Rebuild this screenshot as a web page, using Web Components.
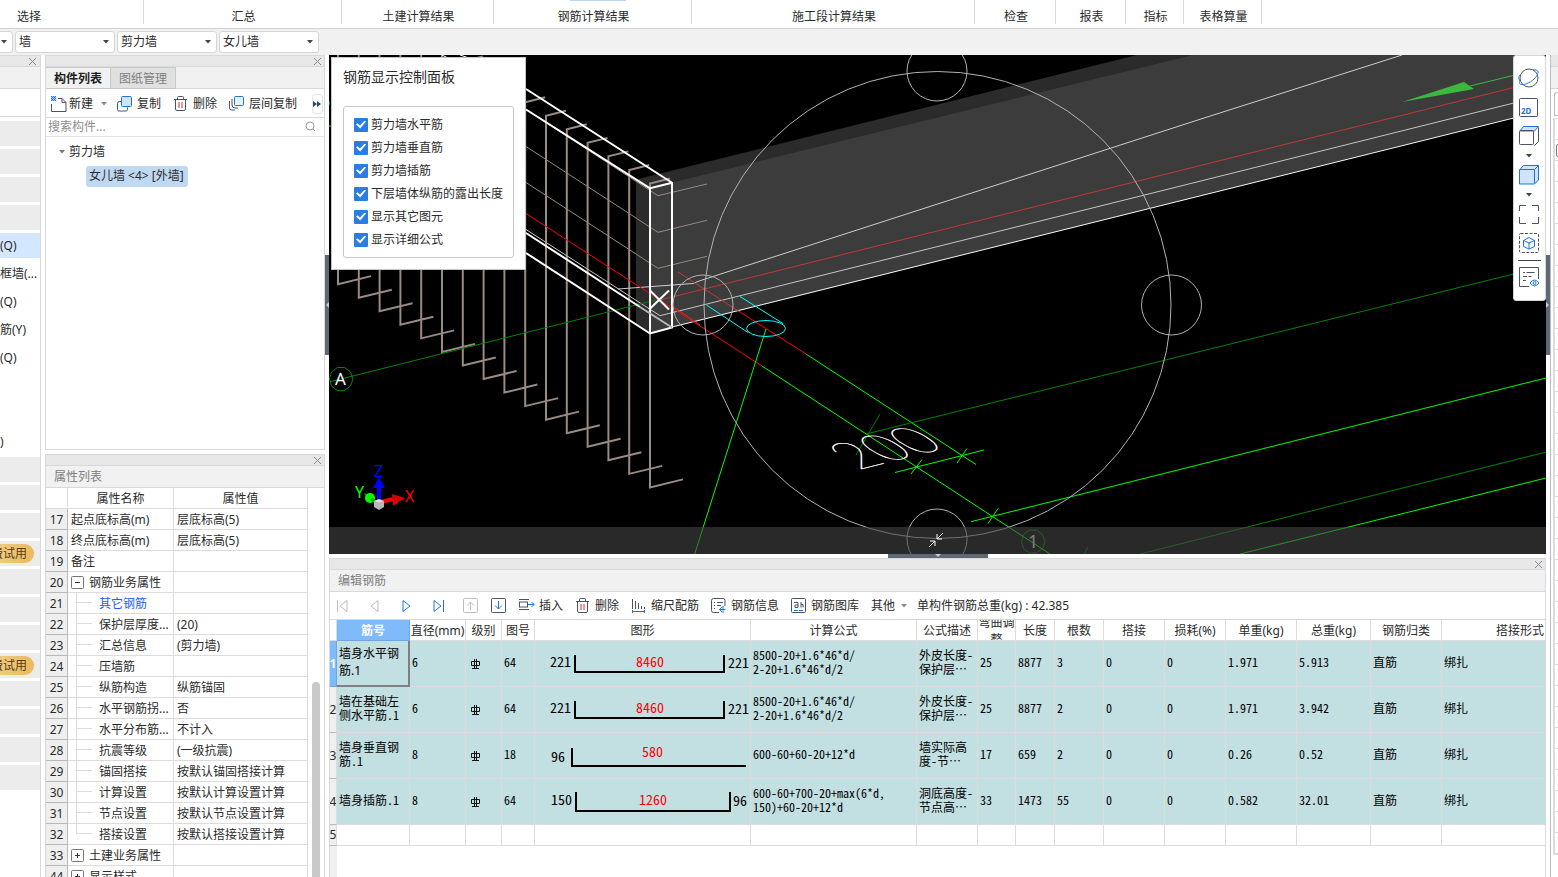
<!DOCTYPE html>
<html lang="zh-CN">
<head>
<meta charset="utf-8">
<title>编辑钢筋</title>
<style>
  html, body {
    margin: 0;
    height: 100%;
  }
  body {
    font: 12px/16px "Noto Sans", "Noto Sans CJK SC", sans-serif;
    color: #2b2b2b;
    background: #fff;
    --line: #d9d9d9;
    --bar: #f1f1f1;
    --title: #e7e7e7;
    --ink: #4a5363;
    --blue: #1d74e0;
    --splitter: #5f6975;
  }
</style>
</head>
<body>
<app-window></app-window>

<script>
const icons = {
  create: '<path d="M8 3.500h4l4 4v9H1.500V9" fill="none" stroke="#4a5363"/><path d="M12 3.500v4h4" fill="none" stroke="#4a5363"/><path d="M1 1h1v1H1zM3 1h1v1H3zM5 1h1v1H5zM2 2h1v1H2zM4 2h1v1H4zM1 3h1v1H1zM3 3h1v1H3zM5 3h1v1H5zM2 4h1v1H2zM4 4h1v1H4zM1 5h1v1H1zM3 5h1v1H3zM5 5h1v1H5z" fill="#1d74e0"/><path d="M1 1h5v5H1z" fill="#1d74e0" opacity=".35"/>',
  copy: '<path d="M4 6.500H2.500Q.500 6.500 .500 8.500v6q0 1.500 1.500 1.500h7q1.500 0 1.500-1.500v-2" fill="none" stroke="#4a5363"/><rect x="4.500" y="1.500" width="10" height="10" rx="1" fill="#cfe3fb" stroke="#1d74e0"/>',
  trash: '<path d="M1 4.500h13M4.500 4V2.500q0-1 1-1h4q1 0 1 1V4M2.500 5v9q0 1.500 1.500 1.500h7q1.500 0 1.500-1.500V5" fill="none" stroke="#4a5363"/><path d="M6 7v6M9 7v6" stroke="#e0262b"/>',
  layers: '<path d="M.500 6v7q0 2 2 2H6M3 4v6q0 3 3 3h3" fill="none" stroke="#4a5363"/><rect x="5.500" y="1.500" width="9" height="9" rx="1" fill="#e8f2ff" stroke="#1d74e0"/>',
  first: '<path d="M3.500 3v12" stroke="#bdbdbd"/><path d="M13 3.500v11L6 9z" fill="none" stroke="#bdbdbd"/>',
  prev: '<path d="M12 3.500v11L5 9z" fill="none" stroke="#bdbdbd"/>',
  next: '<path d="M5 3.500v11L12 9z" fill="none" stroke="#1d74e0"/>',
  last: '<path d="M4 3.500v11L11 9z" fill="none" stroke="#1d74e0"/><path d="M13.500 3v12" stroke="#1d74e0"/>',
  up: '<rect x="1.500" y="1.500" width="14" height="14" rx="1" fill="none" stroke="#bdbdbd"/><path d="M8.500 13V5M5 8.500L8.500 5L12 8.500" fill="none" stroke="#bdbdbd"/>',
  down: '<rect x="1.500" y="1.500" width="14" height="14" rx="1" fill="none" stroke="#4a5363"/><path d="M8.500 4v8M5 8.500L8.500 12L12 8.500" fill="none" stroke="#1d74e0"/>',
  insert: '<path d="M1 2.500h10M1 12.500h10" stroke="#4a5363"/><rect x="1.500" y="5" width="8" height="5" fill="none" stroke="#4a5363"/><path d="M10 7.500h6M13.500 5L16 7.500L13.500 10" fill="none" stroke="#1d74e0"/>',
  scale: '<path d="M1.500 2v10M4.500 4v8M7.500 6v6M10.500 9v3M13.500 10v2" stroke="#4a5363"/><path d="M1 14.500h13M1.500 13v3M13.500 13v3" stroke="#1d74e0"/>',
  info: '<path d="M8 15.500H2.500Q.500 15.500 .500 13.500V3.500q0-2 2-2H12q2 0 2 2V9" fill="none" stroke="#4a5363"/><path d="M3 5.500h1M6 5.500h6M3 8.500h1M6 8.500h4M3 11.500h1" stroke="#4a5363"/><path d="M12 9v7M8.500 12.500h6M11 10L8.500 12.500L11 15" fill="none" stroke="#1d74e0"/>',
  library: '<rect x=".5" y="1.500" width="14" height="14" rx="1" fill="none" stroke="#4a5363"/><path d="M3 5.500h4v5H4v-2.500h3M10 5v5.500M10 7.500h2v3" fill="none" stroke="#4a5363"/><path d="M3 13.500h4M8 13.500h4" stroke="#1d74e0"/>',
  more: '<path d="M0 6l4 3-4 3zM4 6l4 3-4 3z" fill="#3b4452"/>',
  search: '<circle cx="8" cy="8" r="4" fill="none" stroke="#9a9a9a"/><path d="M11 11l2 2" stroke="#9a9a9a"/>'
}
const icon = (name, w = 18) => `<svg width="${w}" height="18" viewBox="0 0 ${w} 18" aria-hidden="true">${icons[name]}</svg>`
const closeIcon = '<svg width="9" height="9" viewBox="0 0 9 9" aria-hidden="true"><path d="M1 1l7 7M8 1l-7 7" stroke="#8a8a8a" fill="none"/></svg>'
const caret = (color = '#444') => `<svg width="6" height="4" viewBox="0 0 6 4" aria-hidden="true"><path d="M0 0h6L3 3.500z" fill="${color}"/></svg>`

const common = `
  *, *::before, *::after { box-sizing: border-box; }
  button {
    font: inherit; color: inherit; background: none; border: 0; padding: 0; margin: 0;
    display: flex; align-items: center; white-space: nowrap;
  }
  svg { display: block; flex: none; }
  table { border-collapse: separate; border-spacing: 0; table-layout: fixed; }
  td, th { padding: 0; font-weight: normal; }
`

class BaseElement extends HTMLElement {
  connectedCallback() {
    if (this.shadowRoot) return
    const root = this.attachShadow({ mode: 'open' })
    root.innerHTML = `<style>${common}${this.styles()}</style>${this.render()}`
  }
}

class AppWindow extends BaseElement {
  styles() {
    return `
      :host { display: flex; flex-direction: column; height: 100vh; overflow: hidden; }
      main { flex: 1; min-height: 0; display: grid; grid-template-columns: 41px 4px 280px 4px minmax(0, 1fr) 4px 8px; }
      .side { display: grid; grid-template-rows: minmax(0, 395fr) minmax(0, 423fr); row-gap: 4px; min-height: 0; }
      .center { display: grid; grid-template-rows: minmax(0, 499fr) 4px minmax(0, 319fr); min-height: 0; min-width: 0; }
      .nav { grid-column: 1; }
      .side { grid-column: 3; }
    `
  }
  render() {
    return `
      <ribbon-bar></ribbon-bar>
      <selector-bar></selector-bar>
      <main>
        <nav-list class="nav"></nav-list>
        <div class="side">
          <component-list></component-list>
          <property-grid></property-grid>
        </div>
        <split-handle dir="left"></split-handle>
        <div class="center">
          <scene-view></scene-view>
          <split-handle dir="down"></split-handle>
          <rebar-editor></rebar-editor>
        </div>
        <split-handle dir="right"></split-handle>
        <side-strip></side-strip>
      </main>
    `
  }
}
customElements.define('app-window', AppWindow)

const groups = [
  ['土建计算结果', 152], ['钢筋计算结果', 198], ['施工段计算结果', 283], ['检查', 81],
  ['报表', 70], ['指标', 58], ['表格算量', 78]
]

class RibbonBar extends BaseElement {
  styles() {
    return `
      :host { display: flex; flex: none; height: 29px; border-bottom: 1px solid #d2d2d2; background: #fff; }
      div { height: 24px; padding: 9px 0 0 2px; border-right: 1px solid #d9d9d9; text-align: center; flex: none; white-space: nowrap; line-height: 15px; }
      .first { width: 144px; text-align: left; padding-left: 17px; }
      .sum { width: 198px; }
      .active { background: linear-gradient(#b9d3f0, #b9d3f0) 76px 0 / 56px 1px no-repeat; }
    `
  }
  render() {
    return `<div class="first">选择</div><div class="sum">汇总</div>` + groups.map(([label, width]) =>
      `<div style="width: ${width}px" ${label === '钢筋计算结果' ? 'class="active"' : ''}>${label}</div>`).join('')
  }
}
customElements.define('ribbon-bar', RibbonBar)

class DropDown extends BaseElement {
  styles() {
    return `
      :host { display: grid; grid-template: 22px / 100px; align-items: center; }
      select {
        grid-area: 1 / 1; appearance: none; width: 100px; height: 22px; margin: 0; padding: 0 3px; border: 1px solid #d6d6d6;
        border-radius: 3px; background: #fff; font: inherit; color: inherit;
      }
      svg { grid-area: 1 / 1; justify-self: end; margin-right: 6px; pointer-events: none; }
    `
  }
  render() {
    const value = this.getAttribute('value')
    return `<select aria-label="${this.getAttribute('label')}"><option>${value}</option></select>${caret()}`
  }
}
customElements.define('drop-down', DropDown)

class SelectorBar extends BaseElement {
  styles() {
    return `
      :host { display: flex; flex: none; align-items: center; gap: 2px; height: 26px; background: var(--bar); overflow: hidden; }
      drop-down { flex: none; }
      drop-down:first-of-type { margin-left: -87px; }
    `
  }
  render() {
    return `
      <drop-down label="楼层" value=""></drop-down>
      <drop-down label="类别" value="墙"></drop-down>
      <drop-down label="类型" value="剪力墙"></drop-down>
      <drop-down label="构件" value="女儿墙"></drop-down>
    `
  }
}
customElements.define('selector-bar', SelectorBar)

// one entry per 28px row: [text, kind]
const navRows = [
  ['', 'group'], ['', 'group'], ['', 'group'], ['', 'group'], ['(Q)', 'selected'],
  ['框墙(...', ''], ['(Q)', ''], ['筋(Y)', ''], ['(Q)', ''], ['', ''], ['', ''], [')', ''],
  ['', 'group'], ['', 'group'], ['', 'group'], ['费试用', 'group trial'], ['', 'group'],
  ['', 'group'], ['', 'group'], ['费试用', 'group trial'], ['', 'group'], ['', 'group'],
  ['', 'group'], ['', 'group']
]

class NavList extends BaseElement {
  styles() {
    return `
      :host { display: flex; flex-direction: column; border-right: 1px solid var(--line); overflow: hidden; }
      header { height: 12px; flex: none; background: var(--title); border: solid var(--line); border-width: 1px 0; display: flex; justify-content: flex-end; align-items: center; padding-right: 3px; }
      .sub { height: 22px; flex: none; background: var(--bar); border-bottom: 1px solid var(--line); }
      .tools { height: 28px; flex: none; border-bottom: 1px solid var(--line); margin-bottom: 4px; }
      ul { list-style: none; margin: 0; padding: 0; display: grid; grid-auto-rows: 25px; row-gap: 3px; }
      li { display: flex; align-items: center; white-space: nowrap; overflow: hidden; }
      .group { background: #ececec; }
      .selected { background: #d3e7ff; }
      .trial { justify-content: flex-end; padding-right: 6px; }
      .trial span {
        flex: none; height: 19px; line-height: 19px; padding: 0 7px 0 12px; border-radius: 10px;
        background: linear-gradient(90deg, #f3d394, #e9ba5c); color: #5c3a10;
      }
    `
  }
  render() {
    return `<header><button aria-label="关闭">${closeIcon}</button></header><div class="sub"></div><div class="tools"></div>
      <ul>${navRows.map(([text, kind]) => `<li class="${kind}"><span>${text}</span></li>`).join('')}</ul>`
  }
}
customElements.define('nav-list', NavList)

class DockPanel extends BaseElement {
  styles() {
    return `
      :host { display: flex; flex-direction: column; min-height: 0; min-width: 0; border: 1px solid var(--line); overflow: hidden; background: #fff; }
      header { height: 11px; flex: none; background: var(--title); border-bottom: 1px solid var(--line); display: flex; justify-content: flex-end; align-items: center; padding-right: 2px; }
      .caption { height: 22px; flex: none; background: var(--bar); border-bottom: 1px solid var(--line); display: flex; }
      ::slotted([slot=caption]) { color: #808080; padding: 3px 8px; }
    `
  }
  render() {
    return `<header><button aria-label="关闭">${closeIcon}</button></header>
      <div class="caption"><slot name="caption"></slot></div><slot></slot>`
  }
}
customElements.define('dock-panel', DockPanel)

class ComponentList extends BaseElement {
  styles() {
    return `
      :host { display: grid; min-height: 0; }
      .tabs { display: flex; padding: 0; }
      .tabs button { height: 22px; width: 65px; padding-top: 1px; justify-content: center; background: #e0e0e0; border: 1px solid #c9c9c9; border-left: 0; color: #808080; }
      .tabs button.on { background: var(--bar); color: #1f1f1f; font-weight: bold; }
      .tools { display: flex; align-items: center; height: 29px; padding: 1px 0 0 4px; border-bottom: 1px solid var(--line); flex: none; }
      .tools svg { margin-right: 2px; }
      .tools button { margin-right: 12px; }
      .tools button.create { margin-right: 10px; }
      .tools .create svg:first-child { margin-right: 1px; }
      .tools .create svg:last-child { margin: 0 0 0 8px; }
      .tools .more { width: 11px; height: 20px; margin: 0 1px 0 auto; border: 1px solid #e4e4e4; border-radius: 3px; overflow: hidden; }
      .tools .more svg { margin: 0; }
      .search { display: flex; align-items: center; height: 19px; border-bottom: 1px solid #e4e4e4; padding: 0 4px 0 2px; flex: none; }
      input { flex: 1; min-width: 0; border: 0; padding: 0; margin: 0; outline: 0; font: inherit; background: none; }
      input::placeholder { color: #8e8e8e; opacity: 1; }
      ul { list-style: none; margin: 0; padding: 3px 0 0 13px; }
      .node { display: flex; align-items: center; height: 24px; gap: 4px; }
      ul ul { padding: 0 0 0 27px; }
      .sel { background: #c0d9f2; border-radius: 3px; padding: 2px 4px 3px 3px; }
    `
  }
  render() {
    return `
      <dock-panel>
        <div slot="caption" class="tabs">
          <button class="on">构件列表</button><button>图纸管理</button>
        </div>
        <div class="tools">
          <button class="create">${icon('create')}新建${caret('#8a8a8a')}</button>
          <button>${icon('copy')}复制</button>
          <button>${icon('trash')}删除</button>
          <button>${icon('layers')}层间复制</button>
          <button class="more" aria-label="更多">${icon('more', 10)}</button>
        </div>
        <div class="search"><input type="text" placeholder="搜索构件..." aria-label="搜索构件">${icon('search')}</div>
        <ul>
          <li><div class="node">${caret('#777')}剪力墙</div>
            <ul><li class="node"><span class="sel">女儿墙 &lt;4&gt; [外墙]</span></li></ul>
          </li>
        </ul>
      </dock-panel>
    `
  }
}
customElements.define('component-list', ComponentList)

// level 0: plain row, 1: expandable group, 2: child of a group
const properties = [
  [17, 0, '起点底标高(m)', '层底标高(5)'],
  [18, 0, '终点底标高(m)', '层底标高(5)'],
  [19, 0, '备注', ''],
  [20, 1, '钢筋业务属性', '', '-'],
  [21, 2, '其它钢筋', ''],
  [22, 2, '保护层厚度...', '(20)'],
  [23, 2, '汇总信息', '(剪力墙)'],
  [24, 2, '压墙筋', ''],
  [25, 2, '纵筋构造', '纵筋锚固'],
  [26, 2, '水平钢筋拐...', '否'],
  [27, 2, '水平分布筋...', '不计入'],
  [28, 2, '抗震等级', '(一级抗震)'],
  [29, 2, '锚固搭接', '按默认锚固搭接计算'],
  [30, 2, '计算设置', '按默认计算设置计算'],
  [31, 2, '节点设置', '按默认节点设置计算'],
  [32, 2, '搭接设置', '按默认搭接设置计算'],
  [33, 1, '土建业务属性', '', '+'],
  [44, 1, '显示样式', '', '+']
]

class PropertyGrid extends BaseElement {
  styles() {
    return `
      :host { display: grid; min-height: 0; }
      dock-panel { border-bottom: 0; }
      .body { display: flex; min-height: 0; }
      table { width: 262px; flex: none; }
      td, th { height: 21px; border: solid #dcdcdc; border-width: 0 1px 1px 0; white-space: nowrap; overflow: hidden; }
      th { padding-top: 2px; }
      th[scope=row] { background: #efefef; border-color: #b9b9b9; }
      td div { display: flex; align-items: center; height: 20px; padding: 2px 0 0 3px; }
      .box { margin: -2px 5px 0 0; }
      .branch { width: 16px; height: 20px; margin: -2px 7px 0 5px; background: linear-gradient(#dcdcdc, #dcdcdc) 0 0 / 1px 100% no-repeat, linear-gradient(#dcdcdc, #dcdcdc) 0 9px / 100% 1px no-repeat; }
      .branch.end { background-size: 1px 10px, 100% 1px; }
      .link { color: #1a5cff; }
      .track { flex: 1; padding-top: 194px; display: flex; justify-content: center; }
      .thumb { width: 8px; border-radius: 4px 4px 0 0; background: #c9c9c9; }
    `
  }
  render() {
    const lead = (level, sign, last) => {
      if (level === 1) return `<svg class="box" width="13" height="13" viewBox="0 0 13 13" aria-hidden="true"><rect x=".5" y=".5" width="12" height="12" rx="1" fill="#fff" stroke="#777"/><path d="M4 6.500h5${sign === '+' ? 'M6.500 4v5' : ''}" stroke="#333"/></svg>`
      if (level === 2) return `<span class="branch ${last ? 'end' : ''}"></span>`
      return ''
    }
    const rows = properties.map(([no, level, name, value, sign]) => `
      <tr><th scope="row">${no}</th>
        <td><div class="${no === 21 ? 'link' : ''}">${lead(level, sign, no === 32)}${name}</div></td>
        <td><div>${value}</div></td></tr>`).join('')
    return `
      <dock-panel>
        <span slot="caption">属性列表</span>
        <div class="body">
          <table>
            <colgroup><col style="width: 22px"><col style="width: 106px"><col style="width: 134px"></colgroup>
            <thead><tr><th></th><th>属性名称</th><th>属性值</th></tr></thead>
            <tbody>${rows}</tbody>
          </table>
          <div class="track"><div class="thumb"></div></div>
        </div>
      </dock-panel>
    `
  }
}
customElements.define('property-grid', PropertyGrid)

class SplitHandle extends BaseElement {
  styles() {
    return `
      :host { display: flex; align-items: flex-start; padding-top: 200px; background: #fff; }
      :host([dir=down]) { justify-content: center; padding: 0; }
      div { width: 4px; height: 100px; background: var(--splitter); display: flex; align-items: center; justify-content: center; }
      :host([dir=down]) div { width: 100px; height: 4px; }
    `
  }
  render() {
    const shapes = { left: 'M4 0v6L1 3z', right: 'M0 0v6L3 3z', down: 'M0 0h6L3 3z' }
    const dir = this.getAttribute('dir')
    const [w, h] = dir === 'down' ? [6, 4] : [4, 6]
    return `<div><svg width="${w}" height="${h}" aria-hidden="true"><path d="${shapes[dir]}" fill="#c3c9d0"/></svg></div>`
  }
}
customElements.define('split-handle', SplitHandle)

class SceneView extends BaseElement {
  styles() {
    return `
      :host { display: grid; position: relative; background: #000; overflow: hidden; min-height: 0; }
      .scene { grid-area: 1 / 1; width: 100%; height: 100%; min-height: 0; }
      .scene text { font-family: "Noto Sans", sans-serif; }
      .foot { position: absolute; left: 0; right: 0; bottom: 0; height: 27px; background: rgba(68, 68, 68, .6); display: flex; justify-content: center; align-items: center; }
      .foot button { margin: 0 4px 2px 0; }
      display-control { position: absolute; left: 2px; top: 2px; }
      view-tools { position: absolute; right: 0; top: 0; }
    `
  }
  bars() {
    let d = ''
    for (let i = 0; i < 16; i++) {
      const x = 650 - i * 20.8
      const bottom = 487.4 - i * 13.55
      const top = 183.5 - i * 13.55
      d += `M${x + 20} ${top - 5}L${x} ${top}V${bottom}l33 -8`
    }
    return d
  }
  render() {
    return `
      <svg class="scene" viewBox="329 55 1217 499" preserveAspectRatio="xMinYMin slice" fill="none" role="img" aria-label="三维视图">
        <path d="M636 179.500L1137 55H1546V95L650 333L636 324z" fill="#2b2b2b"/>
        <path d="M650 188L1193 55H1546V110L650 333z" fill="#3c3c3c"/>
        <path d="${this.bars()}" stroke="#998a84" stroke-width="2"/>
        <path d="M526 109.500L658 195.700L707 184M526 146.500L658 232.300L707 220.300M526 182.500L658 268.300L707 256.300" stroke="#988982"/>
        <path d="M526 229.500L660 315.700L1546 95" stroke="#c4c4c4"/>
        <path d="M618 289L693 283.500L700 280.700L1200 119.300L1402 55" stroke="#cdcdcd"/>
        <path d="M672 327L1546 110" stroke="#f4f4f4"/>
        <path d="M660 300L1546 79.500M678 272L740 312M672 306L700 325" stroke="#c23838"/>
        <path d="M526 213.500L762 366M740 312L806 354" stroke="#f00"/>
        <path d="M806 354L976 464.500M762 366L1050 554" stroke="#0f0"/>
        <path d="M766 329L694.700 554M895 472.500L984 450M911 474L922 459.500M957 463L967 448.500M988 523.500L998 508.500M971 521.700L1546 378M1240 554L1546 478" stroke="#0f0"/>
        <path d="M330 381.700L656 300M866 434L1546 266M880 414L856 455M1140 554L1546 452M1082 558L1088 547" stroke="#008400"/>
        <path d="M1402 102L1464 82L1474 89z" fill="#3cb93c"/>
        <path d="M1470 86L1546 67.500" stroke="#3cb93c"/>
        <path d="M526 89L672 182.700V327.500L650 333.500L526 253M526 109.500L650 188.300V333.500M650 188.300L672 182.700M526 233L640 307" stroke="#fff" stroke-width="2"/>
        <path d="M640 307L672 327.500" stroke="#b8b8b8" stroke-width="2"/>
        <path d="M650 290.500L669 309.500M649 309.500L669 290.500" stroke="#fff" stroke-width="2"/>
        <g stroke="#b2b2b2">
          <circle cx="937.500" cy="305" r="233.500"/>
          <circle cx="937" cy="71" r="30"/><circle cx="703" cy="305" r="30"/>
          <circle cx="1171.500" cy="305" r="30"/><circle cx="937" cy="539" r="30"/>
        </g>
        <g stroke="#0ff"><ellipse cx="766" cy="328.500" rx="19.500" ry="8"/><path d="M740 296.500L783 323.500M706.500 305L748 332.500"/></g>
        <path d="M337.500 367.500h7l6 4.500 2.500 7-2.500 7-6 4.500h-7l-6-4.500-2-7 2-7zM1029.500 530h7l6 4.500 2.500 7-2.500 7-6 4.500h-7l-6-4.500-2-7 2-7z" stroke="#008400"/>
        <path d="M329 101v4M329 126h2" stroke="#0f0"/>
        <path d="M460 55l9 3M442 55l6 3" stroke="#fff"/>
        <text x="335" y="385" font-size="17" fill="#fff">A</text>
        <text x="1028" y="548" font-size="18" fill="#d0d0d0">1</text>
        <text transform="matrix(.88 -.22 .87 .55 858 470)" font-size="58" fill="#fff" stroke="#fff" stroke-width=".5" style="font-family: Lato, sans-serif; font-weight: 100">200</text>
        <path d="M379 503V486" stroke="#00f" stroke-width="4"/><path d="M373 488l6-11 6 11z" fill="#00f"/>
        <path d="M380 502l14-3" stroke="#f00" stroke-width="4"/><path d="M392 494l13 4-12 8z" fill="#d40000"/>
        <path d="M363 493l9 3v6z" fill="#00a000"/><circle cx="370" cy="498" r="5" fill="#0f0"/><path d="M371 499l6 4" stroke="#00b000" stroke-width="3"/>
        <path d="M374 501l5 2 5-2v6l-5 3-5-3z" fill="#b9b9b9"/><path d="M374 501l5-2 5 2-5 2z" fill="#e2e2e2"/>
        <text x="374" y="477" font-size="16" fill="#00f">Z</text>
        <text x="355" y="498" font-size="16" fill="#0f0">Y</text>
        <text x="405" y="502" font-size="16" fill="#f00">X</text>
      </svg>
      <div class="foot"><button aria-label="收起"><svg width="16" height="16" viewBox="0 0 16 16" fill="none" stroke="#fff"><path d="M15 1L9 7M9 2v5h5M1 15l6-6M2 9h5v5"/></svg></button></div>
      <display-control></display-control>
      <view-tools></view-tools>
    `
  }
}
customElements.define('scene-view', SceneView)

class DisplayControl extends BaseElement {
  styles() {
    return `
      :host { display: block; width: 195px; padding: 10px 11px 11px; background: #fff; border: 1px solid #c4c4c4; }
      h2 { margin: 0 0 21px; font-size: 14px; line-height: 17px; font-weight: normal; }
      .list { border: 1px solid #c8c8c8; border-radius: 3px; padding: 6px 10px; display: grid; grid-auto-rows: 23px; }
      label { display: flex; align-items: center; gap: 3px; white-space: nowrap; }
      input { appearance: none; flex: none; width: 14px; height: 14px; margin: 0; border-radius: 1px; background: #2a7de1; display: grid; place-content: center; }
      input:checked::after { content: ""; width: 10px; height: 8px; background: #fff; clip-path: polygon(0 50%, 14% 35%, 40% 62%, 88% 0, 100% 14%, 42% 100%); }
    `
  }
  render() {
    const items = ['剪力墙水平筋', '剪力墙垂直筋', '剪力墙插筋', '下层墙体纵筋的露出长度', '显示其它图元', '显示详细公式']
    return `<h2>钢筋显示控制面板</h2><div class="list">${items.map(item =>
      `<label><input type="checkbox" checked>${item}</label>`).join('')}</div>`
  }
}
customElements.define('display-control', DisplayControl)

class ViewTools extends BaseElement {
  styles() {
    return `
      :host { display: flex; flex-direction: column; align-items: center; width: 33px; height: 246px; padding: 12px 1px 0 0; background: #fff; border: 1px solid #d5d5d5; border-radius: 3px; }
      button { flex: none; height: 20px; }
      hr { width: 23px; margin: 7px 0 6px; border: 0; border-top: 1px solid #3b4452; }
      .g8 { margin-bottom: 9px; }
      .drop { height: 4px; margin: 8px 0 7px; }
      text { font: bold 8px/10px "Noto Sans", sans-serif; }
    `
  }
  render() {
    const svg = body => `<svg width="22" height="20" viewBox="0 0 22 20" fill="none" stroke="#4a5363">${body}</svg>`
    return `
      <button class="g8" aria-label="旋转">${svg('<circle cx="11" cy="10" r="9"/><path d="M2 13C-1 19 10 17 16 11S21 1 15 2" stroke="#1d74e0"/><path d="M2 13C0 10 1 8 2 7" stroke="#1d74e0"/>')}</button>
      <button class="g8" aria-label="二维">${svg('<rect x="1.500" y="1.500" width="18" height="18" rx="1"/><text x="3" y="17" fill="#1d74e0" stroke="none">2D</text>')}</button>
      <button aria-label="俯视">${svg('<path d="M5.500 .500h15l-4 4.500H2z" fill="#cfe3fb" stroke="#1d74e0"/><rect x="1.500" y="4.500" width="14" height="14" rx="1"/><path d="M20.500 1.500v14l-4 4"/>')}</button>
      <button class="drop" aria-label="视角">${caret('#3b4452')}</button>
      <button aria-label="实体">${svg('<path d="M5.500 .500h15v14.500l-4 4H1.500V5z" fill="#cfe3fb" stroke="#1d74e0"/><path d="M1.500 4.500h15v14M16.500 4.500l4-4" stroke="#1d74e0"/>')}</button>
      <button class="drop" aria-label="显示方式">${caret('#3b4452')}</button>
      <button class="g8" aria-label="全屏">${svg('<path d="M1.500 7V1.500H8M14 1.500h6.500V7M20.500 13v6.500H14M8 19.500H1.500V13"/>')}</button>
      <button aria-label="局部三维">${svg('<rect x="1.500" y=".5" width="19" height="19" rx="1" stroke-dasharray="3 1.500"/><path d="M11 4.500l5.500 3v6L11 16l-5.500-2.500v-6zM5.500 7.500L11 10l5.500-2.500M11 10v6" stroke="#1d74e0"/>')}</button>
      <hr>
      <button aria-label="显示设置">${svg('<path d="M11 19.500H1.500V.5h19V12"/><path d="M5 5.500h2M8.500 5.500h8M5 9.500h4M10.500 9.500h3M5 13.500h3"/><path d="M12 16q4.500-6 9 0q-4.500 6-9 0z" stroke="#1d74e0"/><circle cx="16.500" cy="16" r="1.500" stroke="#1d74e0"/>')}</button>
    `
  }
}
customElements.define('view-tools', ViewTools)

const columns = [
  ['', 7], ['筋号', 73], ['直径(mm)', 56], ['级别', 36], ['图号', 33], ['图形', 216], ['计算公式', 166],
  ['公式描述', 61], ['弯曲调整', 38], ['长度', 39], ['根数', 49], ['搭接', 61], ['损耗(%)', 61],
  ['单重(kg)', 71], ['总重(kg)', 74], ['钢筋归类', 71], ['搭接形式', 157]
]

const rebars = [
  { name: '墙身水平钢\n筋.1', d: 6, fig: 64, shape: 'u221', formula: '8500-20+1.6*46*d/\n2-20+1.6*46*d/2', desc: '外皮长度-\n保护层…', rest: [25, 8877, 3, 0, 0, '1.971', '5.913'] },
  { name: '墙在基础左\n侧水平筋.1', d: 6, fig: 64, shape: 'u221', formula: '8500-20+1.6*46*d/\n2-20+1.6*46*d/2', desc: '外皮长度-\n保护层…', rest: [25, 8877, 2, 0, 0, '1.971', '3.942'] },
  { name: '墙身垂直钢\n筋.1', d: 8, fig: 18, shape: 'l96', formula: '600-60+60-20+12*d', desc: '墙实际高\n度-节…', rest: [17, 659, 2, 0, 0, '0.26', '0.52'] },
  { name: '墙身插筋.1', d: 8, fig: 64, shape: 'u150', formula: '600-60+700-20+max(6*d,\n150)+60-20+12*d', desc: '洞底高度-\n节点高…', rest: [33, 1473, 55, 0, 0, '0.582', '32.01'] }
]

// bar bending sketches, drawn in the 215x45 figure cell
const shapes = {
  u221: '<path d="M40 14v17h149V14"/><text x="15" y="26">221</text><text class="len" x="101" y="26">8460</text><text x="193" y="27">221</text>',
  l96: '<path d="M37 15v18h174"/><text x="16" y="29">96</text><text class="len" x="107" y="24">580</text>',
  u150: '<path d="M41 13v19h154V13"/><text x="16" y="26">150</text><text class="len" x="104" y="26">1260</text><text x="198" y="27">96</text>'
}
const gradeIcon = '<svg width="12" height="12" viewBox="0 0 12 12" fill="none" stroke="#111" aria-label="HRB400"><path d="M5.500 1v9M7.500 1v9M2.500 3.500h8v4h-8zM3 10.500h7"/></svg>'

class RebarEditor extends BaseElement {
  styles() {
    return `
      :host { display: grid; min-height: 0; min-width: 0; grid-template-columns: minmax(0, 1fr); }
      dock-panel { border-bottom: 0; }
      .tools { display: flex; align-items: center; height: 28px; flex: none; padding: 1px 0 0 4px; border-bottom: 1px solid var(--line); white-space: nowrap; overflow: hidden; }
      .tools button { margin-right: 12px; gap: 2px; }
      .tools .nav { margin-right: 14px; }
      .tools .step { margin-right: 10px; }
      .tools .insert { gap: 3px; }
      .tools .other { margin-right: 10px; gap: 6px; }
      .wrap { flex: 1; min-height: 0; overflow: hidden; background: linear-gradient(#efefef, #efefef) 0 0 / 7px 100% no-repeat; }
      table { width: 1269px; }
      td, th { border: solid #dcdcdc; border-width: 0 1px 1px 0; overflow: hidden; white-space: nowrap; }
      thead th { height: 21px; background: #fff; }
      thead div { height: 20px; padding-top: 2px; display: flex; align-items: center; justify-content: center; overflow: hidden; }
      thead .wraps { white-space: normal; text-align: center; line-height: 17px; }
      thead .active { background: #7fbafa; border-color: #6ba7e8; color: #fff; font-weight: bold; }
      tbody th { background: #efefef; border-bottom-color: #b9b9b9; }
      tbody th span { display: block; margin: 0 -3px; }
      tbody .current { background: #7fbafa; border-color: #6ba7e8; color: #fff; font-weight: bold; }
      tbody td {
        height: 46px; background: #c2dfe1; color: #000; padding: 0 2px 3px; white-space: pre; line-height: 14px;
        font-family: "Noto Sans CJK SC", sans-serif; font-feature-settings: "hwid";
      }
      tbody tr:last-child td, tbody tr:last-child th { height: 21px; }
      tbody tr:last-child td { background: #fff; }
      tbody td.edit { font-family: "Noto Sans", "Noto Sans CJK SC", sans-serif; font-feature-settings: normal; line-height: 17px; box-shadow: inset -1px -1px #808080; border-color: #808080; }
      tbody td.figure { padding: 0; }
      .figure svg { stroke: #000; stroke-width: 2; fill: none; }
      .figure text { stroke: none; fill: #000; font-size: 14px; }
      .figure .len { fill: #f00; }
      .grade svg { margin: 3px 0 0 1px; }
    `
  }
  row(bar, i) {
    const cells = bar.rest.map(v => `<td>${v}</td>`).join('')
    return `<tr>
      <th scope="row" class="${i === 0 ? 'current' : ''}"><span>${i + 1}</span></th>
      <td class="${i === 0 ? 'edit' : ''}">${bar.name}</td><td>${bar.d}</td><td class="grade">${gradeIcon}</td><td>${bar.fig}</td>
      <td class="figure"><svg width="215" height="45" viewBox="0 0 215 45">${shapes[bar.shape]}</svg></td>
      <td>${bar.formula}</td><td>${bar.desc}</td>${cells}<td>直筋</td><td>绑扎</td></tr>`
  }
  render() {
    const cols = columns.map(([, w]) => `<col style="width: ${w}px">`).join('')
    const heads = columns.map(([label]) =>
      `<th class="${label === '筋号' ? 'active' : ''}"><div class="${label === '弯曲调整' ? 'wraps' : ''}">${label}</div></th>`).join('')
    const blank = '<td></td>'.repeat(columns.length - 1)
    return `
      <dock-panel>
        <span slot="caption">编辑钢筋</span>
        <div class="tools">
          <button class="nav" aria-label="首条">${icon('first')}</button>
          <button class="nav" aria-label="上一条">${icon('prev')}</button>
          <button class="nav" aria-label="下一条">${icon('next')}</button>
          <button class="nav" aria-label="末条">${icon('last')}</button>
          <button class="step" aria-label="上移">${icon('up')}</button>
          <button class="step" aria-label="下移">${icon('down')}</button>
          <button class="insert">${icon('insert')}插入</button>
          <button>${icon('trash')}删除</button>
          <button>${icon('scale')}缩尺配筋</button>
          <button>${icon('info')}钢筋信息</button>
          <button>${icon('library')}钢筋图库</button>
          <button class="other">其他${caret('#8a8a8a')}</button>
          <span>单构件钢筋总重(kg) : 42.385</span>
        </div>
        <div class="wrap">
          <table>
            <colgroup>${cols}</colgroup>
            <thead><tr>${heads}</tr></thead>
            <tbody>${rebars.map((bar, i) => this.row(bar, i)).join('')}
              <tr><th scope="row"><span>5</span></th>${blank}</tr>
            </tbody>
          </table>
        </div>
      </dock-panel>
    `
  }
}
customElements.define('rebar-editor', RebarEditor)

class SideStrip extends BaseElement {
  styles() {
    return `
      :host { display: flex; flex-direction: column; border-left: 1px solid #b9bcc4; overflow: hidden; }
      .title { height: 12px; background: var(--title); border-bottom: 1px solid var(--line); flex: none; }
      .caption { height: 22px; background: var(--bar); border-bottom: 1px solid var(--line); flex: none; }
      .tab { height: 24px; margin: 3px 0 2px 3px; border: 1px solid #bdbdbd; border-right: 0; border-radius: 3px 0 0 0; flex: none; }
      .grid { margin-left: 2px; border-left: 2px solid #dcdcdc; border-top: 1px solid #dcdcdc; display: grid; grid-auto-rows: 21px; border-bottom: 1px solid #dcdcdc; }
      .grid div { border-bottom: 1px solid #dcdcdc; display: flex; align-items: center; padding-left: 1px; }
      i { flex: none; width: 13px; height: 13px; border: 1px solid #777; border-radius: 2px; }
    `
  }
  render() {
    return `<div class="title"></div><div class="caption"></div><div class="tab"></div>
      <div class="grid">${Array.from({ length: 35 }, (_, i) => `<div>${i === 1 ? '<i></i>' : ''}</div>`).join('')}</div>`
  }
}
customElements.define('side-strip', SideStrip)
</script>
</body>
</html>
